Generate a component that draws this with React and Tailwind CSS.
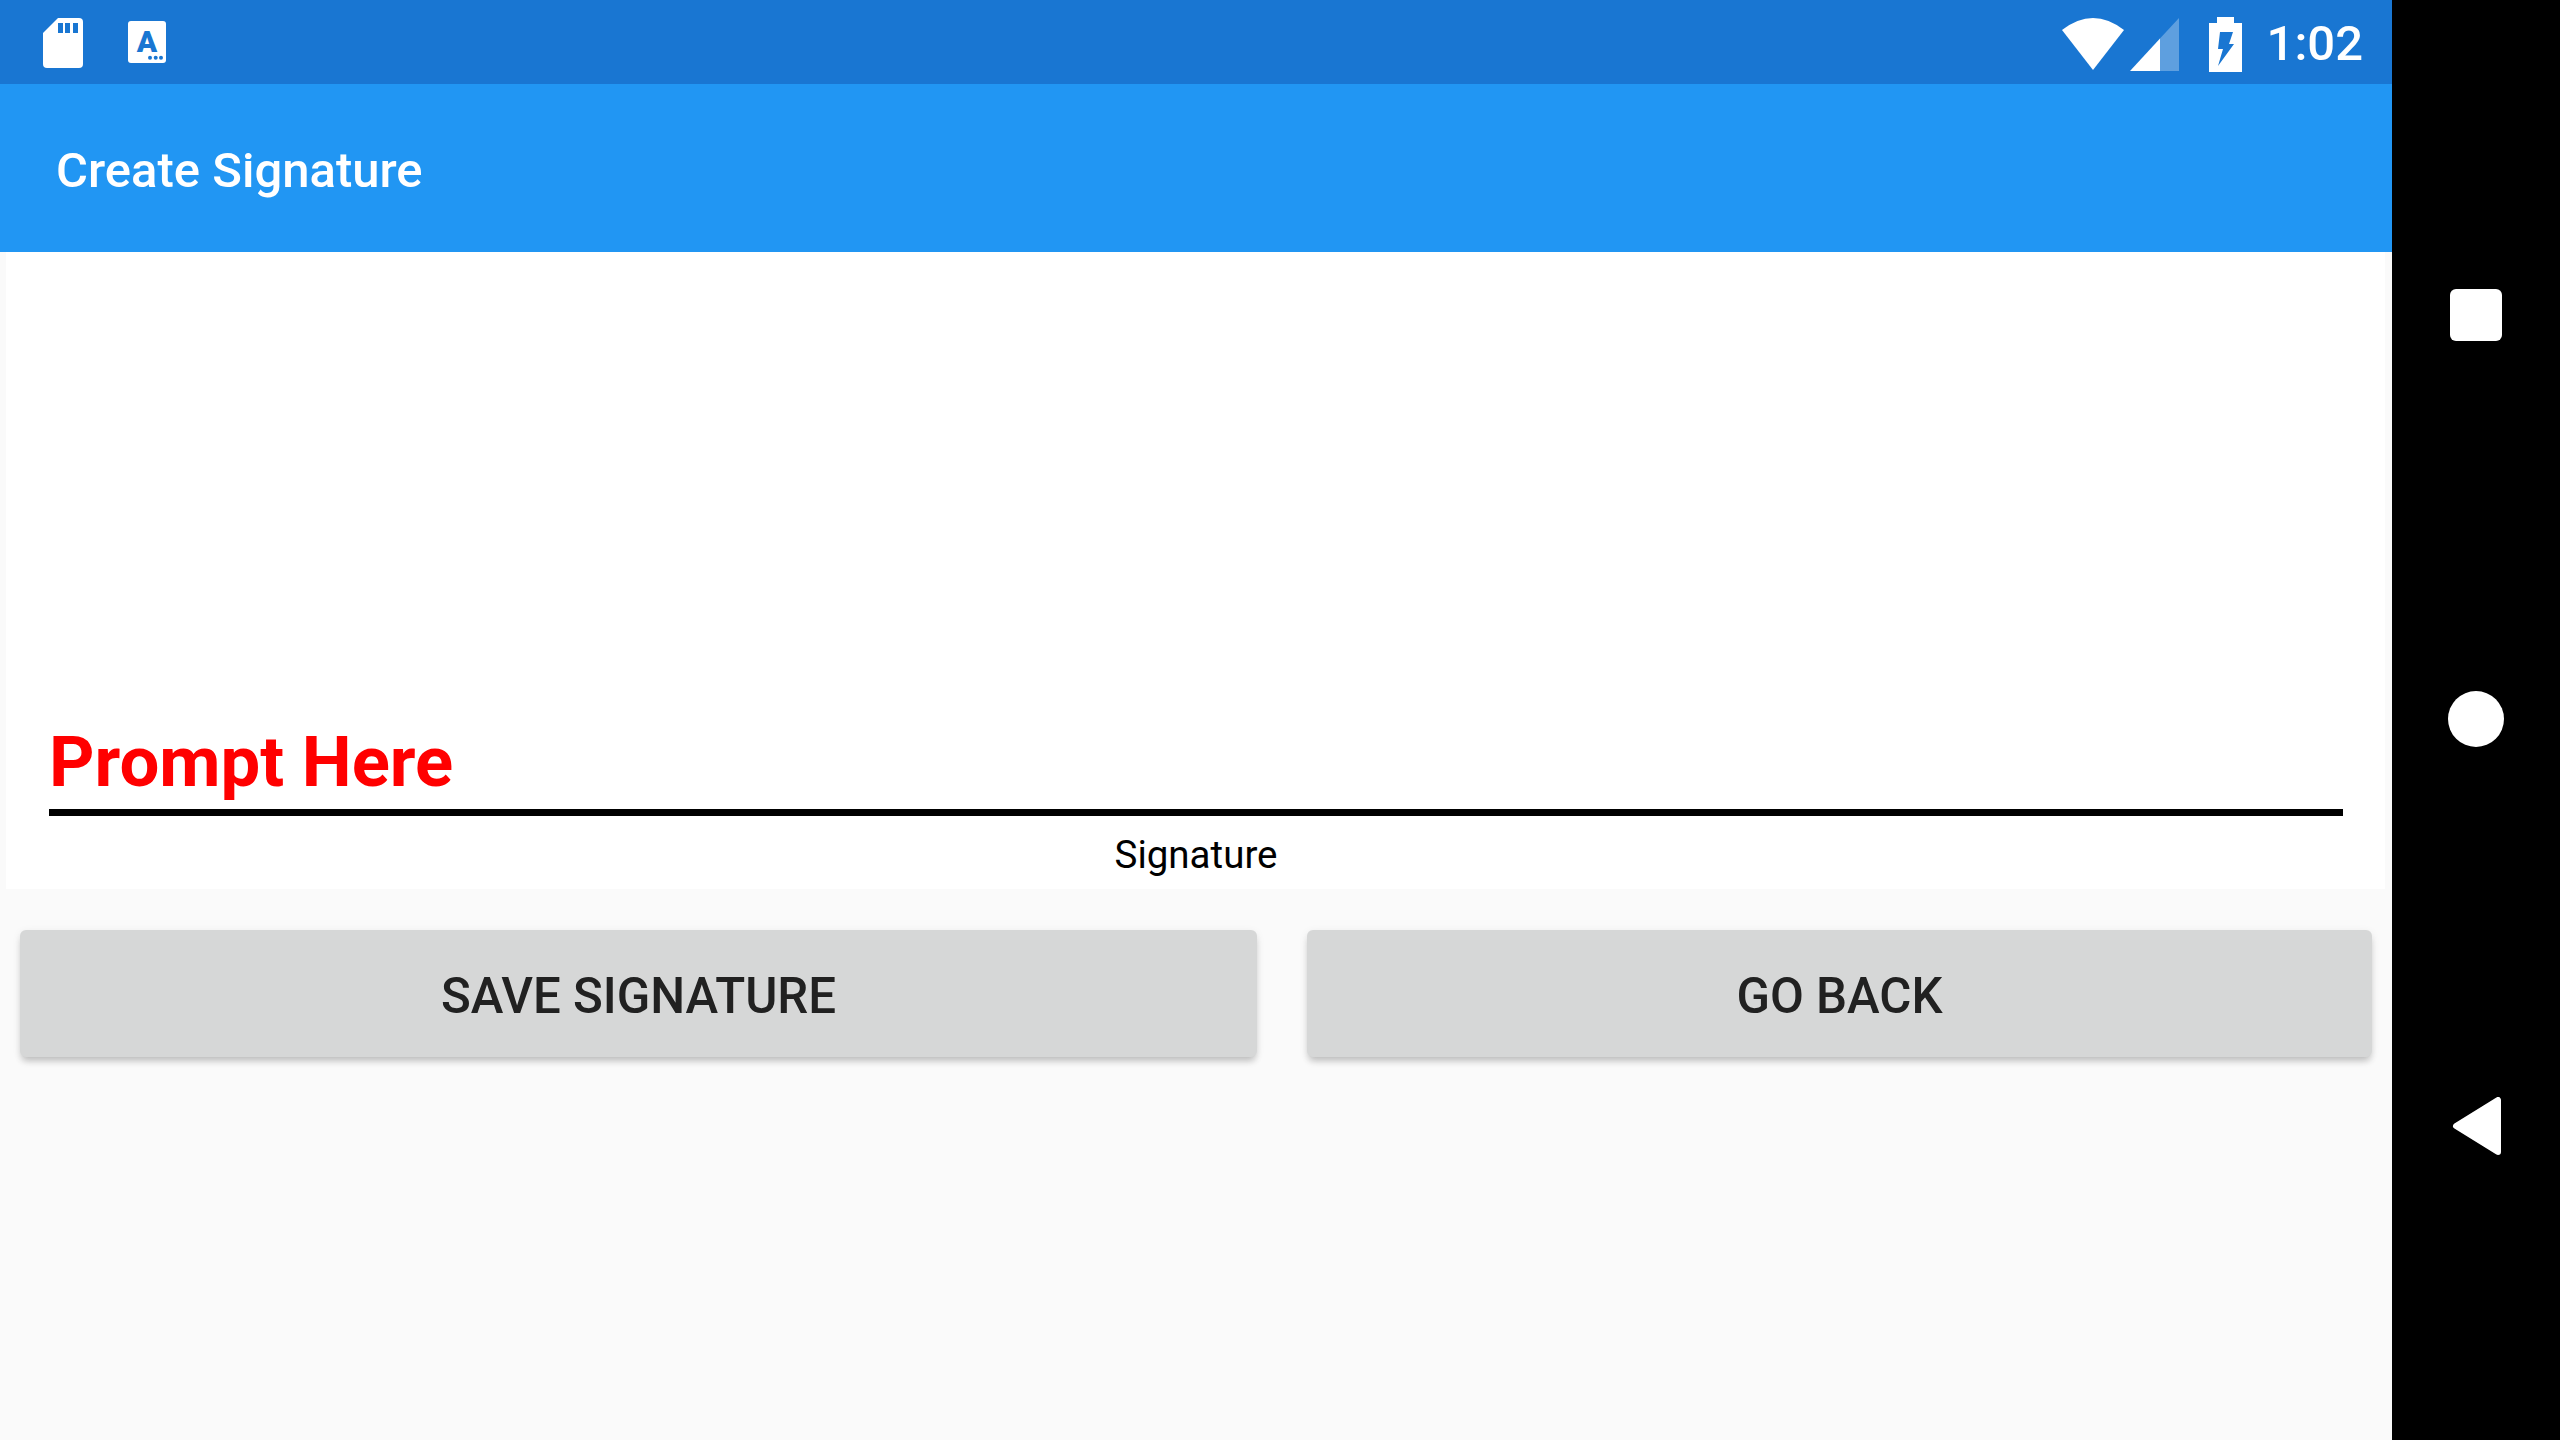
export default function App() {
  return (
    <div className="flex w-[2560px] h-[1440px] overflow-hidden bg-black font-['Roboto',sans-serif]">
      <div className="flex flex-col w-[2392px] h-full bg-[#fafafa]">
        <div className="flex items-center h-[84px] shrink-0 bg-[#1976d2] pl-[43px] pr-[29px]">
          <svg width="40" height="50" viewBox="0 0 40 50" className="mb-[-1px]">
            <path fill="#fff" d="M15 0H36a4 4 0 0 1 4 4V46a4 4 0 0 1-4 4H4a4 4 0 0 1-4-4V15Z" />
            <rect x="15" y="5" width="5" height="10" fill="#1976d2" />
            <rect x="22" y="5" width="5" height="10" fill="#1976d2" />
            <rect x="30" y="5" width="5" height="10" fill="#1976d2" />
          </svg>
          <svg width="38" height="42" viewBox="0 0 38 42" className="ml-[45px]">
            <rect width="38" height="42" rx="3" fill="#fff" />
            <text x="19" y="31" textAnchor="middle" fontFamily="Roboto" fontWeight="900" fontSize="30" fill="#1976d2">A</text>
            <circle cx="22" cy="36.7" r="2" fill="#1976d2" />
            <circle cx="27.7" cy="36.7" r="2" fill="#1976d2" />
            <circle cx="33" cy="36.7" r="2" fill="#1976d2" />
          </svg>
          <div className="flex-1" />
          <svg width="62" height="52" viewBox="0 0 62 52" className="mt-[4px]">
            <path fill="#fff" d="M0 12Q31-12 62 12L31 52Z" />
          </svg>
          <svg width="49" height="53" viewBox="0 0 49 53" className="ml-[6px] mt-[4px]">
            <path fill="#fff" fillOpacity="0.3" d="M30 20.5 49 0V53H30Z" />
            <path fill="#fff" d="M0 53 30 20.5V53Z" />
          </svg>
          <svg width="33" height="55" viewBox="0 0 33 55" className="ml-[30px] mt-[4px]">
            <path fill="#fff" d="M8 0H25V6H33V55H0V6H8Z" />
            <path fill="#1976d2" d="M11 15H24L20 27H25L9 49 14 32H9Z" />
          </svg>
          <span className="ml-[25px] text-[49px] leading-none font-medium text-white mt-[3px]">1:02</span>
        </div>
        <div className="flex items-center h-[168px] shrink-0 bg-[#2196f3] pl-[56px] pt-[4px]">
          <span className="text-[49px] leading-none font-medium text-white">Create Signature</span>
        </div>
        <div className="flex flex-col h-[637px] shrink-0 mx-[6px] w-[2379px] bg-white px-[43px]">
          <div className="flex-1" />
          <div className="text-[70.7px] leading-[82px] font-bold text-[#ff0000] mb-[6px]">Prompt Here</div>
          <div className="h-[7px] bg-black w-[2294px] shrink-0" />
          <div className="h-[73px] pt-[16px] text-center text-[38.5px] leading-[45px] text-black w-[2294px]">Signature</div>
        </div>
        <div className="flex mt-[41px] pl-[20px] gap-[50px]">
          <div className="flex items-center justify-center pt-[7px] w-[1237px] h-[127px] rounded-[6px] bg-[#d6d7d7] text-[49.2px] font-medium text-[#212121] shadow-[0_6px_7px_-2px_rgba(0,0,0,0.2),0_2px_9px_rgba(0,0,0,0.08)]">SAVE SIGNATURE</div>
          <div className="flex items-center justify-center pt-[7px] w-[1065px] h-[127px] rounded-[6px] bg-[#d6d7d7] text-[49.2px] font-medium text-[#212121] shadow-[0_6px_7px_-2px_rgba(0,0,0,0.2),0_2px_9px_rgba(0,0,0,0.08)]">GO BACK</div>
        </div>
      </div>
      <div className="flex flex-col items-center w-[168px] pt-[289px]">
        <div className="w-[52px] h-[52px] rounded-[6px] bg-white" />
        <div className="w-[56px] h-[56px] rounded-full bg-white mt-[350px]" />
        <svg width="52" height="58" viewBox="0 0 52 58" className="mt-[350px] ml-[1px]">
          <path fill="#fff" stroke="#fff" strokeWidth="6" strokeLinejoin="round" d="M5 29 47 3V55Z" />
        </svg>
      </div>
    </div>
  );
}
